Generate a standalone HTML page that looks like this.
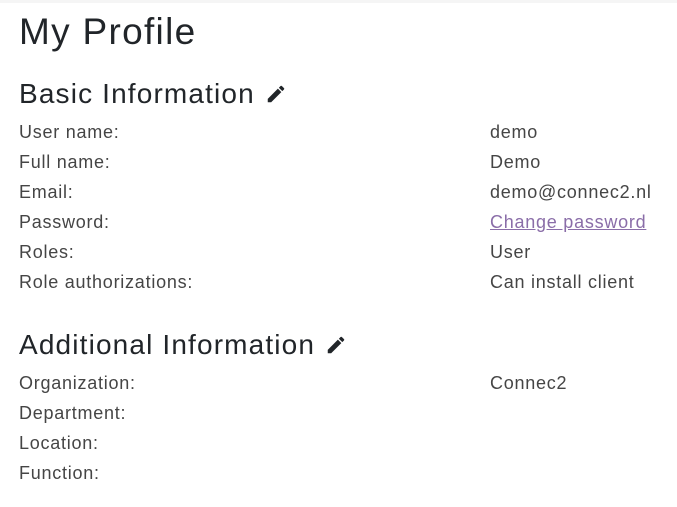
<!DOCTYPE html>
<html><head><style>
body{margin:0;width:677px;height:507px;background:#fff;font-family:"Liberation Sans",sans-serif;color:#212529;overflow:hidden;position:relative}
.top{position:absolute;left:0;top:0;width:677px;height:3px;background:#f5f5f5}
h1{position:absolute;left:19px;top:10px;margin:0;font-size:37px;font-weight:normal;line-height:44px;letter-spacing:1.3px}
h2{position:absolute;left:19px;margin:0;font-size:28px;font-weight:normal;line-height:34px;letter-spacing:1.15px}
.r{position:absolute;left:0;width:677px;font-size:18px;line-height:22px;color:#454545;letter-spacing:0.75px}
.r span{position:absolute}
.r .l{left:19px}.r .v{left:490px}
a{color:#8a6da8;text-decoration:underline}
svg{vertical-align:-2px;margin-left:10px}
</style></head><body>
<div class="top"></div>
<h1>My Profile</h1>
<h2 style="top:77px">Basic Information<svg width="22" height="22" viewBox="0 0 24 24"><path fill="#212529" d="M3 17.25V21h3.75L17.81 9.94l-3.75-3.75L3 17.25zM20.71 7.04a1 1 0 0 0 0-1.41l-2.34-2.34a1 1 0 0 0-1.41 0l-1.830 1.83 3.75 3.75 1.83-1.83z"/></svg></h2>
<div class="r" style="top:121px"><span class="l">User name:</span><span class="v">demo</span></div>
<div class="r" style="top:151px"><span class="l">Full name:</span><span class="v">Demo</span></div>
<div class="r" style="top:181px"><span class="l">Email:</span><span class="v">demo@connec2.nl</span></div>
<div class="r" style="top:211px"><span class="l">Password:</span><span class="v"><a>Change password</a></span></div>
<div class="r" style="top:241px"><span class="l">Roles:</span><span class="v">User</span></div>
<div class="r" style="top:271px"><span class="l">Role authorizations:</span><span class="v">Can install client</span></div>
<h2 style="top:328px">Additional Information<svg width="22" height="22" viewBox="0 0 24 24"><path fill="#212529" d="M3 17.25V21h3.75L17.81 9.94l-3.75-3.75L3 17.25zM20.71 7.04a1 1 0 0 0 0-1.41l-2.34-2.34a1 1 0 0 0-1.41 0l-1.83 1.83 3.75 3.75 1.83-1.83z"/></svg></h2>
<div class="r" style="top:372px"><span class="l">Organization:</span><span class="v">Connec2</span></div>
<div class="r" style="top:402px"><span class="l">Department:</span></div>
<div class="r" style="top:432px"><span class="l">Location:</span></div>
<div class="r" style="top:462px"><span class="l">Function:</span></div>
</body></html>
